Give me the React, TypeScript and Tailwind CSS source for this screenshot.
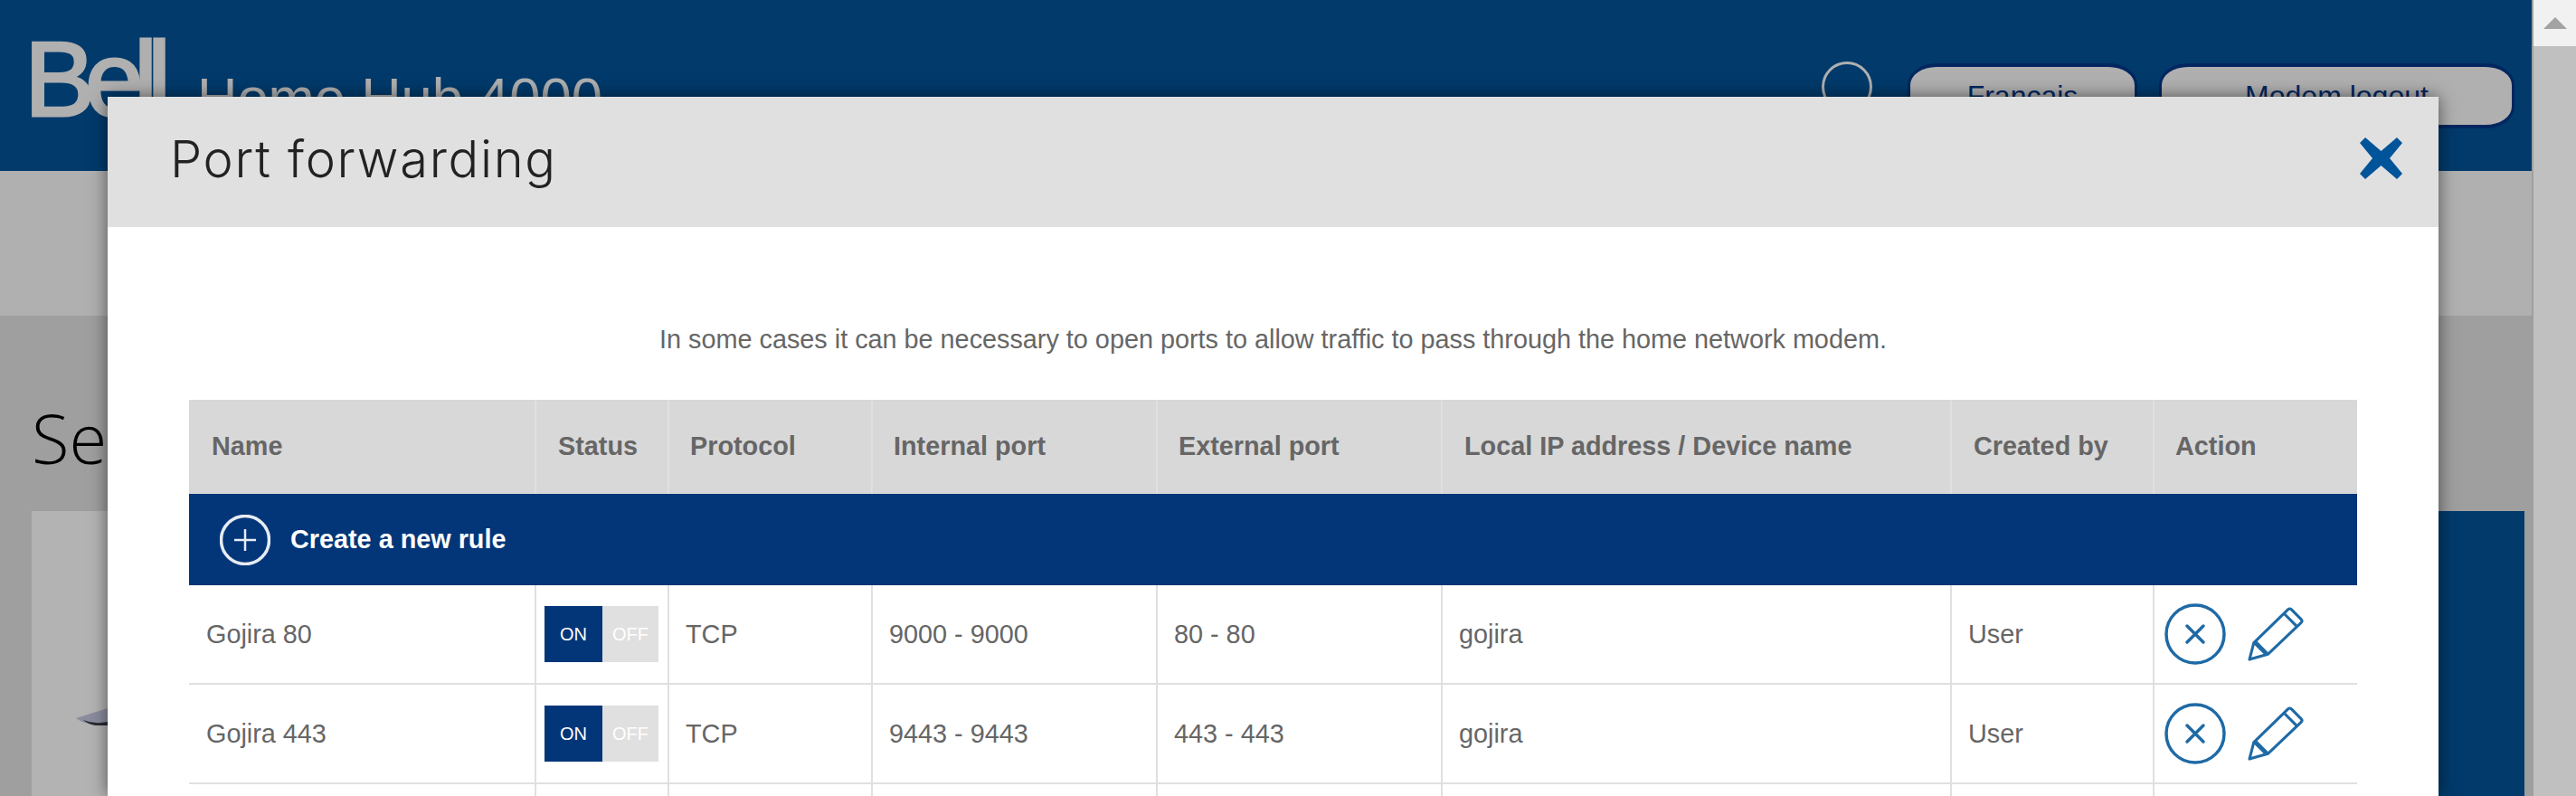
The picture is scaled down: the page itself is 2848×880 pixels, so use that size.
const columns = [
  { label: 'Name', width: 'w-[383px]', pad: 'pl-[25px]' },
  { label: 'Status', width: 'w-[147px]', pad: 'pl-[24px]' },
  { label: 'Protocol', width: 'w-[225px]', pad: 'pl-[23px]' },
  { label: 'Internal port', width: 'w-[315px]', pad: 'pl-[23px]' },
  { label: 'External port', width: 'w-[315px]', pad: 'pl-[23px]' },
  { label: 'Local IP address / Device name', width: 'w-[563px]', pad: 'pl-[24px]' },
  { label: 'Created by', width: 'w-[224px]', pad: 'pl-[24px]' },
  { label: 'Action', width: 'w-[225px]', pad: 'pl-[23px]' },
];

const rules = [
  { name: 'Gojira 80', height: 'h-[109px]', protocol: 'TCP', internal: '9000 - 9000', external: '80 - 80', device: 'gojira', by: 'User' },
  { name: 'Gojira 443', height: 'h-[110px]', protocol: 'TCP', internal: '9443 - 9443', external: '443 - 443', device: 'gojira', by: 'User' },
];

const CircleX = () => (
  <svg width="68" height="68" viewBox="0 0 68 68" fill="none" stroke="#1f6aa5" strokeWidth="3.5">
    <circle cx="34" cy="34" r="32" />
    <path d="M25 25 43 43M43 25 25 43" strokeLinecap="round" />
  </svg>
);

const Pencil = () => (
  <svg width="62" height="60" viewBox="0 0 64 62" fill="none" stroke="#1f6aa5" strokeWidth="3.2" strokeLinejoin="round">
    <path d="M2 60 7 41 46 3Q48 1 50 3L61 14Q63 16 61 18L23 54Z" />
    <path d="M42 8 56 22" />
    <path d="M8 40 22 54" strokeWidth="5" />
  </svg>
);

const Toggle = () => (
  <div className="flex h-[62px] w-[126px] bg-[#e0e0e0] text-[20px] leading-none text-white">
    <div className="flex w-[64px] items-center justify-center bg-[#033678]">ON</div>
    <div className="flex flex-1 items-center justify-center">OFF</div>
  </div>
);

export default function App() {
  return (
    <div className="relative flex h-[880px] w-[2848px] overflow-hidden bg-[#9f9f9f] font-['Liberation_Sans',sans-serif]">
      <div className="flex w-[2799px] flex-col">
        <header className="flex h-[189px] items-start bg-[#013a6b] pl-[27px] text-[#b0b0b0]">
          <div className="mt-[29px] w-[158px] shrink-0 text-[117px] leading-[117px] tracking-[-11px] [-webkit-text-stroke:3px_#b0b0b0]">Bell</div>
          <div className="ml-[33px] mt-[73px] shrink-0 text-[61.5px] leading-[70px]">Home Hub 4000</div>
          <div className="ml-auto mt-[68px] flex shrink-0 items-start pr-[19px]">
            <div className="h-[56px] w-[56px] shrink-0 rounded-full border-[3px] border-[#b0b0b0]" />
            <button className="ml-[39px] mt-[2px] h-[72px] w-[254px] shrink-0 rounded-[32px/24px] border-x-[3px] border-y-4 border-[#022660] bg-[#b0b0b0] text-[32px] text-[#022660]">
              Français
            </button>
            <button className="ml-[24px] mt-[2px] h-[72px] w-[393px] shrink-0 rounded-[32px/24px] border-x-[3px] border-y-4 border-[#022660] bg-[#b0b0b0] text-[32px] text-[#022660]">
              Modem logout
            </button>
          </div>
        </header>
        <nav className="h-[160px] bg-[#b0b0b0]" />
        <main className="flex-1 pl-[35px] pr-[8px]">
          <h1 className="mt-[90px] font-['Open_Sans',sans-serif] text-[76px] font-light leading-[90px] text-black">Se</h1>
        </main>
      </div>

      {/* card behind the modal */}
      <div className="absolute left-[35px] top-[565px] h-[315px] w-[2756px] bg-[#b3b3b3]">
        <div className="absolute right-0 top-0 h-full w-[400px] bg-[#013a6b]" />
        <svg className="absolute left-[49px] top-[218px]" width="40" height="22" viewBox="0 0 40 22">
          <path d="M0 11 35 0V19H24Q8 17 0 11Z" fill="#8b8d9e" />
          <path d="M8 13Q20 18 35 15V19H22Q14 18 8 13Z" fill="#2a2a35" />
        </svg>
      </div>

      {/* scrollbar */}
      <div className="ml-[2px] flex w-[47px] flex-col bg-[#c0c0c0]">
        <div className="flex h-[51px] items-center justify-center bg-[#f1f1f1]">
          <div className="h-0 w-0 border-x-[13px] border-b-[13px] border-x-transparent border-b-[#a3a3a3]" />
        </div>
      </div>

      {/* modal */}
      <div className="absolute left-[119px] top-[107px] h-[773px] w-[2577px] bg-white shadow-[0_0_18px_rgba(0,0,0,0.55)]">
        <div className="flex h-[144px] items-center justify-between bg-[#e0e0e0] pl-[69px] pr-[40px]">
          <h2 className="mb-[6px] font-['Inter',sans-serif] text-[56px] font-light leading-none tracking-[1.7px] text-[#222]">Port forwarding</h2>
          <svg className="mb-[9px]" width="47" height="46" viewBox="0 0 47 46" fill="#00549a">
            <path d="M0 6 6 0 23.5 15 41 0 47 6 33 23 47 40 41 46 23.5 31 6 46 0 40 14 23Z" />
          </svg>
        </div>
        <p className="mt-[108px] text-center text-[28.8px] leading-[32px] text-[#666]">
          In some cases it can be necessary to open ports to allow traffic to pass through the home network modem.
        </p>
        <table className="ml-[90px] mt-[51px] w-[2397px] table-fixed border-collapse text-[28.8px] text-[#666]">
          <thead>
            <tr className="h-[104px] bg-[#d8d8d8]">
              {columns.map((col, i) => (
                <th key={col.label} className={`${col.width} ${col.pad} p-0 text-left font-bold ${i ? 'border-l-2 border-[#e0e0e0]' : ''}`}>
                  {col.label}
                </th>
              ))}
            </tr>
          </thead>
          <tbody>
            <tr className="h-[101px] bg-[#033678] text-white">
              <td colSpan={8} className="p-0 pl-[34px] font-bold">
                <div className="flex items-center gap-[22px]">
                  <svg width="56" height="56" viewBox="0 0 56 56" fill="none" stroke="#e6ecf3">
                    <circle cx="28" cy="28" r="26.5" strokeWidth="3.5" />
                    <path d="M16 28H40M28 16V40" strokeWidth="2.5" />
                  </svg>
                  Create a new rule
                </div>
              </td>
            </tr>
            {rules.map(rule => (
              <tr key={rule.name} className={`${rule.height} border-b-2 border-[#e0e0e0]`}>
                <td className="p-0 pl-[19px] pt-[2px]">{rule.name}</td>
                <td className="border-l-2 border-[#e0e0e0] p-0 pl-[9px]"><Toggle /></td>
                <td className="border-l-2 border-[#e0e0e0] p-0 pl-[18px] pt-[2px]">{rule.protocol}</td>
                <td className="border-l-2 border-[#e0e0e0] p-0 pl-[18px] pt-[2px]">{rule.internal}</td>
                <td className="border-l-2 border-[#e0e0e0] p-0 pl-[18px] pt-[2px]">{rule.external}</td>
                <td className="border-l-2 border-[#e0e0e0] p-0 pl-[18px] pt-[2px]">{rule.device}</td>
                <td className="border-l-2 border-[#e0e0e0] p-0 pl-[18px] pt-[2px]">{rule.by}</td>
                <td className="border-l-2 border-[#e0e0e0] p-0 pl-[11px]">
                  <div className="flex items-center gap-[24px]">
                    <CircleX />
                    <Pencil />
                  </div>
                </td>
              </tr>
            ))}
            <tr className="h-[110px]">
              {columns.map((col, i) => (
                <td key={col.label} className={i ? 'border-l-2 border-[#e0e0e0] p-0' : 'p-0'} />
              ))}
            </tr>
          </tbody>
        </table>
      </div>
    </div>
  );
}
